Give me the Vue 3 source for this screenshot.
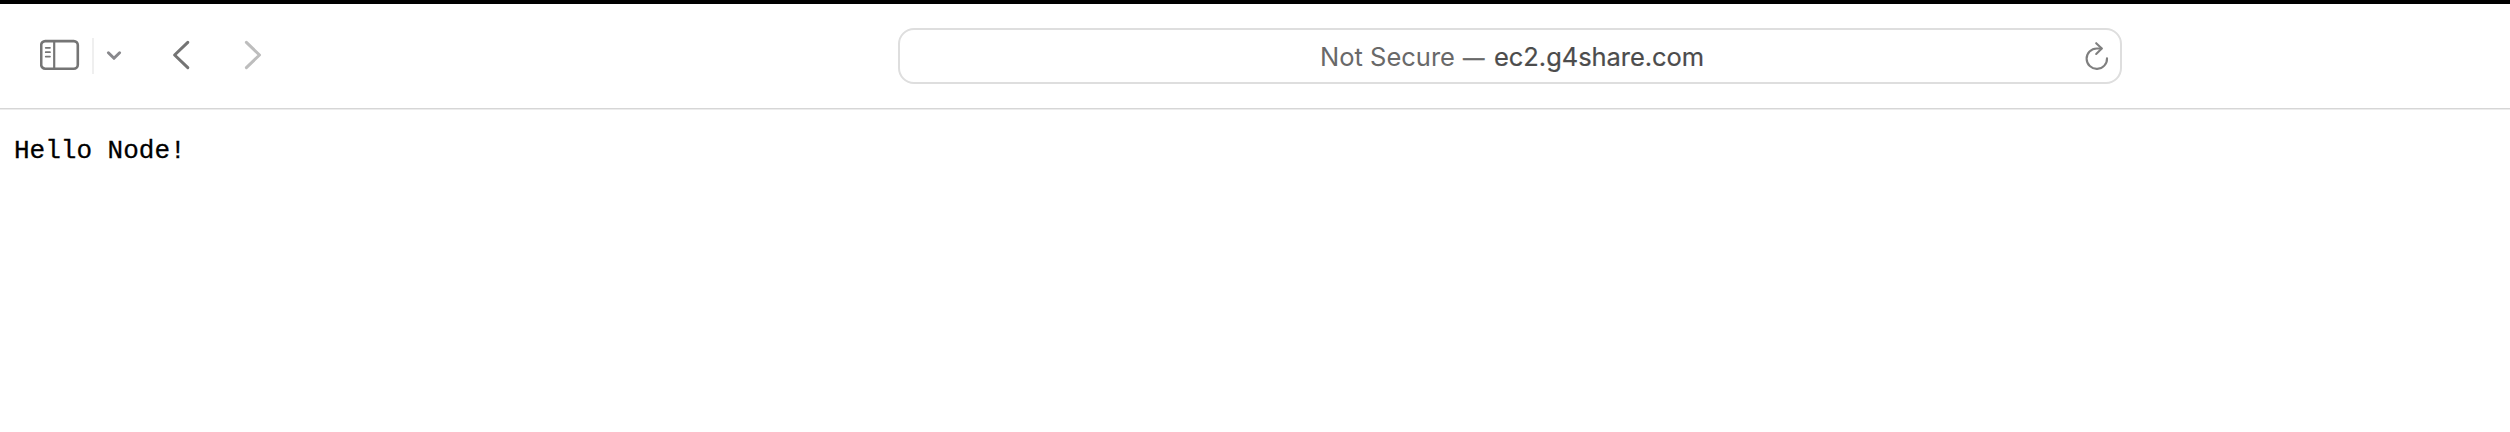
<script setup>
const status = 'Not Secure'
const host = 'ec2.g4share.com'
const body = 'Hello Node!'
</script>

<template>
  <div class="browser">
    <header class="toolbar">
      <svg class="sidebar" viewBox="0 0 40 32" fill="none" stroke="#757575" stroke-linecap="round">
        <rect x="1.2" y="2.1" width="36.6" height="27.6" rx="4" stroke-width="2.6" />
        <path d="M14.2 2.5V29" stroke-width="2.2" stroke-linecap="butt" />
        <path d="M5.7 8.8H10M5.7 13.2H10M5.7 17.6H10" stroke-width="1.7" />
      </svg>
      <span class="divider"></span>
      <svg class="menu" viewBox="0 0 16 12" fill="none" stroke="#88888c" stroke-width="3" stroke-linecap="round" stroke-linejoin="round">
        <path d="M2.4 2.8L8 8.3L13.6 2.8" />
      </svg>
      <svg class="back" viewBox="0 0 18 30" fill="none" stroke="#747474" stroke-width="3" stroke-linecap="round" stroke-linejoin="round">
        <path d="M15.8 2.4L2.6 15L15.8 27.6" />
      </svg>
      <svg class="forward" viewBox="0 0 18 30" fill="none" stroke="#bdbdbd" stroke-width="3" stroke-linecap="round" stroke-linejoin="round">
        <path d="M2.4 2.4L15.5 15L2.4 27.6" />
      </svg>
      <div class="address">
        <div class="label"><span class="status">{{ status }}</span><span class="dash">—</span><span class="host">{{ host }}</span></div>
        <svg class="reload" viewBox="0 0 24 30" fill="none" stroke="#7f7f7f" stroke-width="2.1" stroke-linecap="round" stroke-linejoin="round">
          <path d="M22 17.2A10.2 10.2 0 1 1 11.8 7.5H16.5" />
          <path d="M11.2 2.2L16.8 7.6L11.2 13" />
        </svg>
      </div>
    </header>
    <pre class="content">{{ body }}</pre>
  </div>
</template>

<style>
body {
  background: #fff;
}
</style>

<style scoped>
.browser {
  box-sizing: border-box;
  height: 432px;
  border-top: 4px solid #000;
  background: #fff;
  overflow: hidden;
}
.toolbar {
  box-sizing: border-box;
  display: flex;
  align-items: flex-start;
  height: 105px;
  padding-left: 40px;
  border-bottom: 1px solid #d6d6d6;
  box-shadow: 0 1px 0 #ececec;
}
.toolbar > * {
  flex: none;
}
.sidebar {
  width: 40px;
  height: 32px;
  margin-top: 35px;
}
.divider {
  width: 2px;
  height: 36px;
  margin: 34px 0 0 12px;
  background: #efefef;
}
.menu {
  width: 16px;
  height: 12px;
  margin: 46px 0 0 12px;
}
.back {
  width: 18px;
  height: 30px;
  margin: 36px 0 0 50px;
}
.forward {
  width: 18px;
  height: 30px;
  margin: 36px 0 0 54px;
}
.address {
  box-sizing: border-box;
  display: flex;
  width: 1224px;
  height: 56px;
  margin: 24px 0 0 636px;
  border: 2px solid #dedede;
  border-radius: 16px;
}
.label {
  display: flex;
  align-items: baseline;
  flex: none;
  width: 1185px;
  padding-left: 420px;
  box-sizing: border-box;
  font: 400 25.5px/54px Inter, sans-serif;
  white-space: nowrap;
}
.status {
  width: 143px;
  color: #696969;
}
.dash {
  width: 31px;
  font-size: 21.5px;
  color: #696969;
  -webkit-text-stroke: 0.3px #696969;
}
.host {
  color: #4c4c4c;
  letter-spacing: -0.05px;
  -webkit-text-stroke: 0.2px #4c4c4c;
}
.reload {
  flex: none;
  width: 24px;
  height: 30px;
  margin-top: 11px;
}
.content {
  margin: 27px 0 0 14px;
  font: 26px/30px "Liberation Mono", monospace;
  color: #000;
  -webkit-text-stroke: 0.3px #000;
}
</style>
